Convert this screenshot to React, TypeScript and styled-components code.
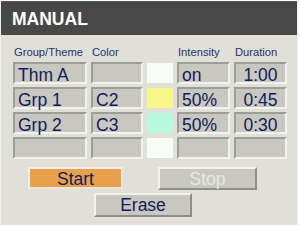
import React from "react";
import styled, { createGlobalStyle } from "styled-components";

const Global = createGlobalStyle`
  html, body { margin: 0; padding: 0; background: #ffffff; }
  body { font-family: "Liberation Sans", Arial, sans-serif; }
`;

const Panel = styled.div`
  margin-top: 1px;
  width: 298px;
  height: 224px;
  box-sizing: border-box;
  background: #e0e0d8;
  border-left: 1px solid #f0f0ec;
  border-right: 1px solid #f0f0ec;
  display: flex;
  flex-direction: column;
`;

const Header = styled.div`
  height: 34px;
  background: #484848;
  border-top: 1px solid #5a5a5a;
  box-sizing: border-box;
  color: #ffffff;
  font-weight: bold;
  font-size: 17.5px;
  line-height: 34px;
  padding-left: 11px;
`;

const Content = styled.div`
  padding: 10px 0 0 12px;
  display: flex;
  flex-direction: column;
`;

const Table = styled.div`
  display: grid;
  grid-template-columns: 74px 52px 26px 53px 53px;
  column-gap: 4px;
  row-gap: 3px;
`;

const Label = styled.div`
  font-size: 11.2px;
  line-height: 14px;
  height: 14px;
  color: #203470;
  padding-left: 1px;
  white-space: nowrap;
`;

const Cell = styled.div<{ $center?: boolean }>`
  height: 22px;
  box-sizing: border-box;
  background: #c8c8c0;
  border-top: 2px solid #9e9e98;
  border-left: 2px solid #9e9e98;
  border-bottom: 2px solid #f2f2ee;
  border-right: 2px solid #f2f2ee;
  font-size: 17.5px;
  line-height: 16px;
  padding: 3px 0 0 ${(p) => (p.$center ? 0 : 3)}px;
  text-align: ${(p) => (p.$center ? "center" : "left")};
  color: #102058;
  white-space: nowrap;
  overflow: visible;
`;

const Swatch = styled.div<{ $color: string }>`
  height: 20px;
  margin: 1px 0;
  background: ${(p) => p.$color};
`;

const ButtonRow = styled.div<{ $indent: number; $top: number }>`
  display: flex;
  gap: 35px;
  padding-left: ${(p) => p.$indent}px;
  margin-top: ${(p) => p.$top}px;
`;

const Button = styled.div<{ $width: number; $height: number; $tone?: "orange" | "gray"; $disabled?: boolean }>`
  width: ${(p) => p.$width}px;
  height: ${(p) => p.$height}px;
  box-sizing: border-box;
  background: ${(p) => (p.$tone === "orange" ? "#e8a04c" : "#c8c8c0")};
  border-top: 2px solid ${(p) => (p.$tone === "orange" ? "#f6eee2" : "#f2f2ee")};
  border-left: 2px solid ${(p) => (p.$tone === "orange" ? "#f6eee2" : "#f2f2ee")};
  border-bottom: 2px solid ${(p) => (p.$tone === "orange" ? "#f0e6d8" : "#8e8e8a")};
  border-right: 2px solid ${(p) => (p.$tone === "orange" ? "#f0e6d8" : "#8e8e8a")};
  color: ${(p) => (p.$disabled ? "#e8e8e2" : "#102058")};
  font-size: 17.5px;
  line-height: 18px;
  text-align: center;
  padding-top: 1px;
`;

const rows = [
  { group: "Thm A", color: "", swatch: "#f8fcf8", intensity: "on", duration: "1:00" },
  { group: "Grp 1", color: "C2", swatch: "#f8f888", intensity: "50%", duration: "0:45" },
  { group: "Grp 2", color: "C3", swatch: "#b8f8e0", intensity: "50%", duration: "0:30" },
  { group: "", color: "", swatch: "#f8fcf8", intensity: "", duration: "" },
];

export default function App() {
  return (
    <>
      <Global />
      <Panel>
        <Header>MANUAL</Header>
        <Content>
          <Table>
            <Label>Group/Theme</Label>
            <Label>Color</Label>
            <Label />
            <Label>Intensity</Label>
            <Label>Duration</Label>
            {rows.map((r, i) => (
              <React.Fragment key={i}>
                <Cell>{r.group}</Cell>
                <Cell>{r.color}</Cell>
                <Swatch $color={r.swatch} />
                <Cell>{r.intensity}</Cell>
                <Cell $center>{r.duration}</Cell>
              </React.Fragment>
            ))}
          </Table>
          <ButtonRow $indent={15} $top={8}>
            <Button $width={95} $height={22} $tone="orange">Start</Button>
            <Button $width={99} $height={23} $disabled>Stop</Button>
          </ButtonRow>
          <ButtonRow $indent={81} $top={3}>
            <Button $width={98} $height={24}>Erase</Button>
          </ButtonRow>
        </Content>
      </Panel>
    </>
  );
}
